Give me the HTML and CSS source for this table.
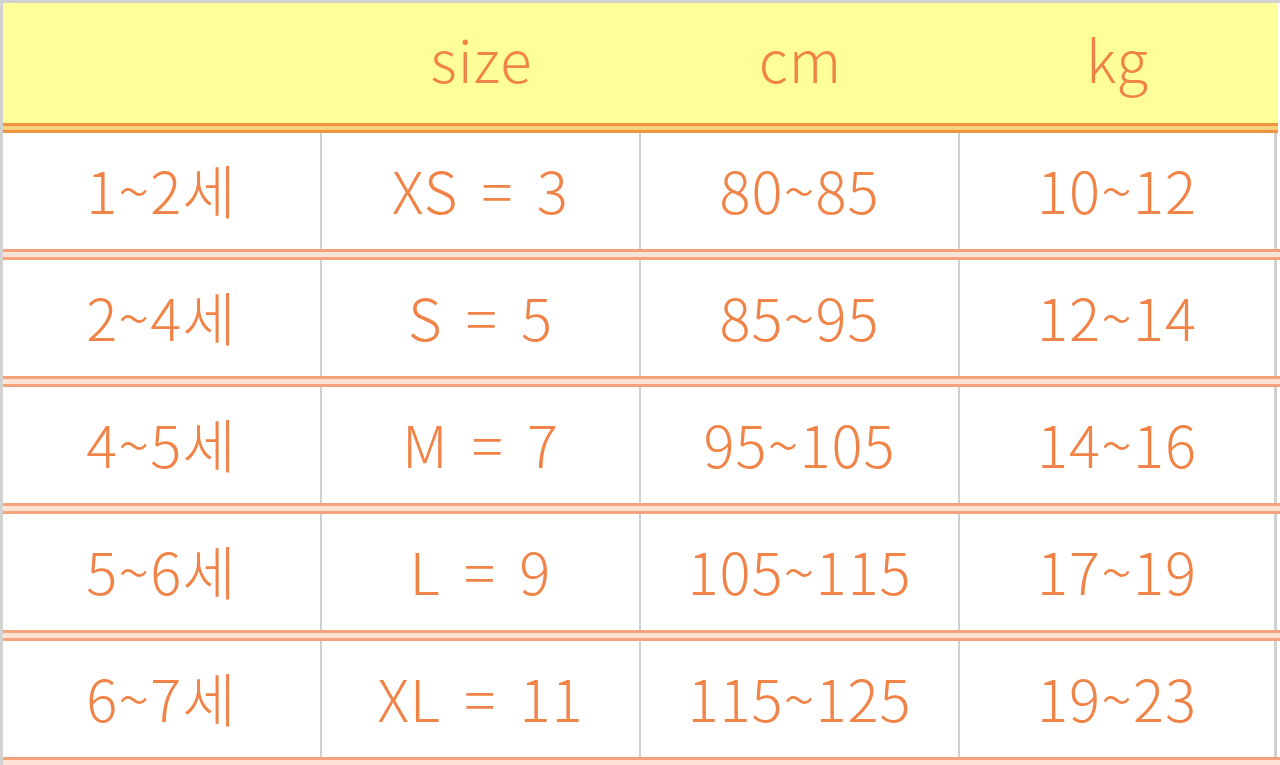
FILE: index.html
```html
<!DOCTYPE html>
<html lang="ko">
<head>
<meta charset="utf-8">
<title>Size chart</title>
<link rel="stylesheet" href="styles.css">
</head>
<body>
<div class="chart">
  <div class="row head">
    <div class="cell"></div>
    <div class="cell">size</div>
    <div class="cell">cm</div>
    <div class="cell">kg</div>
  </div>
  <div class="row">
    <div class="cell">1~2세</div>
    <div class="cell">XS = 3</div>
    <div class="cell">80~85</div>
    <div class="cell">10~12</div>
  </div>
  <div class="row">
    <div class="cell">2~4세</div>
    <div class="cell">S = 5</div>
    <div class="cell">85~95</div>
    <div class="cell">12~14</div>
  </div>
  <div class="row">
    <div class="cell">4~5세</div>
    <div class="cell">M = 7</div>
    <div class="cell">95~105</div>
    <div class="cell">14~16</div>
  </div>
  <div class="row">
    <div class="cell">5~6세</div>
    <div class="cell">L = 9</div>
    <div class="cell">105~115</div>
    <div class="cell">17~19</div>
  </div>
  <div class="row">
    <div class="cell">6~7세</div>
    <div class="cell">XL = 11</div>
    <div class="cell">115~125</div>
    <div class="cell">19~23</div>
  </div>
</div>
</body>
</html>
```
FILE: styles.css
```css
html, body {
  margin: 0;
  padding: 0;
  background: #ffffff;
  overflow: hidden;
}

.chart {
  width: 1280px;
  height: 765px;
  box-sizing: border-box;
  border-top: 3px solid #d2d2d2;
  border-left: 3px solid #d2d2d2;
  font-family: "Noto Sans CJK KR", "Noto Sans", sans-serif;
  font-weight: 300;
  font-size: 58px;
  letter-spacing: 1px;
  word-spacing: 6px;
  color: #f08448;
  overflow: hidden;
}

.row {
  display: grid;
  grid-template-columns: 319px 319px 319px 317px;
  height: 116px;
  padding-bottom: 11px;
  background:
    linear-gradient(to bottom,
      #f4a27c 0, #f4a27c 3px,
      #fde3d6 3px, #fde3d6 8px,
      #f4a27c 8px, #f4a27c 11px) bottom left / 100% 11px no-repeat;
  background-color: #ffffff;
}

.row .cell {
  display: flex;
  align-items: center;
  justify-content: center;
  border-right: 2px solid #d0d0d0;
  background: #ffffff;
  line-height: 1;
  padding-bottom: 4px;
}

.row .cell:last-child {
  border-right: 3px solid #d0d0d0;
}

.head {
  height: 120px;
  padding-bottom: 10px;
  margin-right: 2px;
  background:
    linear-gradient(to bottom,
      #ef9440 0, #ef9440 3px,
      #fbd07a 3px, #fbd07a 7px,
      #ef9440 7px, #ef9440 10px) bottom left / 100% 10px no-repeat;
  background-color: #ffff99;
  grid-template-columns: 319px 319px 319px 315px;
}

.head .cell,
.head .cell:last-child {
  background: #ffff99;
  border-right: 0;
  padding-top: 0;
  padding-bottom: 10px;
}
```
